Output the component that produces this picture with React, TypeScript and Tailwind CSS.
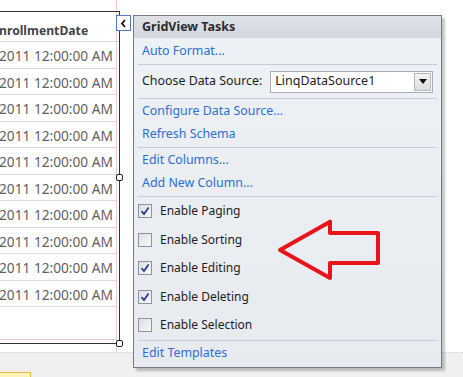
import React from 'react';

const ROWS = Array.from({ length: 10 }, (_, i) => i);

function Sep() {
  return <div className="mx-[4px] h-px bg-[#c5ccd6] shrink-0" />;
}

function TaskLink({ label, h = 'h-[23px]' }: { label: string; h?: string }) {
  return (
    <div className={`${h} flex items-center px-[8px] shrink-0`}>
      <span className="text-[#2c6fd4] text-[12.4px] leading-none">{label}</span>
    </div>
  );
}

function Check({ label, checked }: { label: string; checked: boolean }) {
  return (
    <div className="h-[28.5px] flex items-center gap-[8px] pl-[4px] shrink-0">
      <span className="w-[14px] h-[14px] border border-[#8f9296] bg-gradient-to-br from-[#dcdfe3] to-[#f7f8f9] flex items-center justify-center">
        {checked && (
          <svg width="10" height="10" viewBox="0 0 10 10">
            <path d="M1.5 5.2 L4 8 L8.6 1.4" fill="none" stroke="#2b3d91" strokeWidth="1.8" />
          </svg>
        )}
      </span>
      <span className="text-[#1d1d1d] text-[12px] leading-none">{label}</span>
    </div>
  );
}

function Handle({ className }: { className: string }) {
  return (
    <div
      className={`absolute w-[7px] h-[7px] bg-white border border-[#222] rounded-[2px] ${className}`}
    />
  );
}

export default function App() {
  return (
    <div
      className="relative w-[463px] h-[377px] overflow-hidden bg-white"
      style={{ fontFamily: '"Noto Sans", "Open Sans", sans-serif' }}
    >
      {/* designer surface */}
      <div className="h-[352px] flex">
        <div className="w-[117px] h-full border-r border-[#eccaca] flex flex-col pt-[11px]">
          <div className="w-[120px] h-[333px] border-t border-r border-b border-[#333] flex flex-col overflow-hidden">
            <div className="h-[30px] shrink-0 border-b border-[#d9d9d9] flex items-end pb-[1px] overflow-hidden">
              <span className="text-[12.2px] font-bold text-[#454545] whitespace-nowrap -ml-[1px]">
                nrollmentDate
              </span>
            </div>
            {ROWS.map((r) => (
              <div
                key={r}
                className="h-[26.5px] shrink-0 border-b border-[#dadada] flex items-center overflow-hidden w-[116px]"
              >
                <span className="text-[13.7px] text-[#5f5f5f] whitespace-nowrap -ml-[1px] mt-[4px]">
                  2011 12:00:00 AM
                </span>
              </div>
            ))}
            <div className="flex-1" />
            <div className="h-px w-[116px] bg-[#eccaca] mb-[3px]" />
          </div>
        </div>
      </div>

      {/* bottom tray */}
      <div className="h-[25px] bg-[#f0f0f0] border-t border-dotted border-[#d6d6d6] relative">
        <div className="absolute left-0 bottom-0 w-[31px] h-[5px] bg-[#fff3b8] border-t border-r border-[#e6b84a]" />
      </div>

      <Handle className="left-[116px] top-[174px]" />
      <Handle className="left-[116px] top-[340px]" />

      {/* smart tag glyph */}
      <div className="absolute left-[116px] top-[15px] w-[15px] h-[16px] bg-white border border-[#5477c6] flex items-center justify-center">
        <svg width="7" height="9" viewBox="0 0 7 9">
          <path d="M5 1 L2 4.5 L5 8" fill="none" stroke="#111" strokeWidth="1.8" />
        </svg>
      </div>

      {/* GridView Tasks panel */}
      <div className="absolute left-[133px] top-[15px] w-[309px] border border-[#757a82] bg-gradient-to-b from-[#eef1f5] to-[#e7eaee] shadow-[3px_3px_2px_rgba(0,0,0,0.22)] flex flex-col">
        <div className="h-[22px] shrink-0 bg-gradient-to-b from-[#dfe3e8] to-[#d3d8df] flex items-center px-[8px]">
          <span className="text-[12.5px] font-bold text-[#2b2b2b] leading-none">GridView Tasks</span>
        </div>
        <TaskLink label="Auto Format..." h="h-[26px]" />
        <Sep />
        <div className="h-[33px] shrink-0 flex items-center px-[8px]">
          <span className="text-[12.4px] text-[#1d1d1d] w-[130px] leading-none">Choose Data Source:</span>
          <div className="w-[165px] h-[22px] bg-white border border-[#a9afb7] flex items-center pl-[4px] pr-[1px]">
            <span className="flex-1 text-[12.5px] text-[#1d1d1d] leading-none">LinqDataSource1</span>
            <span className="w-[17px] h-[18px] border border-[#b4b8be] bg-gradient-to-b from-[#f4f4f4] to-[#dcdcdc] flex items-center justify-center">
              <svg width="8" height="5" viewBox="0 0 8 5">
                <path d="M0 0 H8 L4 5 Z" fill="#111" />
              </svg>
            </span>
          </div>
        </div>
        <Sep />
        <div className="py-[1px] flex flex-col shrink-0">
          <TaskLink label="Configure Data Source..." />
          <TaskLink label="Refresh Schema" />
        </div>
        <Sep />
        <div className="py-[1px] flex flex-col shrink-0">
          <TaskLink label="Edit Columns..." />
          <TaskLink label="Add New Column..." />
        </div>
        <Sep />
        <div className="flex flex-col shrink-0">
          <Check label="Enable Paging" checked />
          <Check label="Enable Sorting" checked={false} />
          <Check label="Enable Editing" checked />
          <Check label="Enable Deleting" checked />
          <Check label="Enable Selection" checked={false} />
        </div>
        <Sep />
        <TaskLink label="Edit Templates" h="h-[26px]" />
      </div>

      {/* red annotation arrow */}
      <svg className="absolute left-[270px] top-[212px]" width="120" height="76" viewBox="270 212 120 76">
        <path
          d="M280 250 L330 221.7 L330 233 L378 233 L378 263 L330 263 L330 278 Z"
          fill="none"
          stroke="#e8141a"
          strokeWidth="4"
          strokeLinejoin="round"
        />
      </svg>
    </div>
  );
}
